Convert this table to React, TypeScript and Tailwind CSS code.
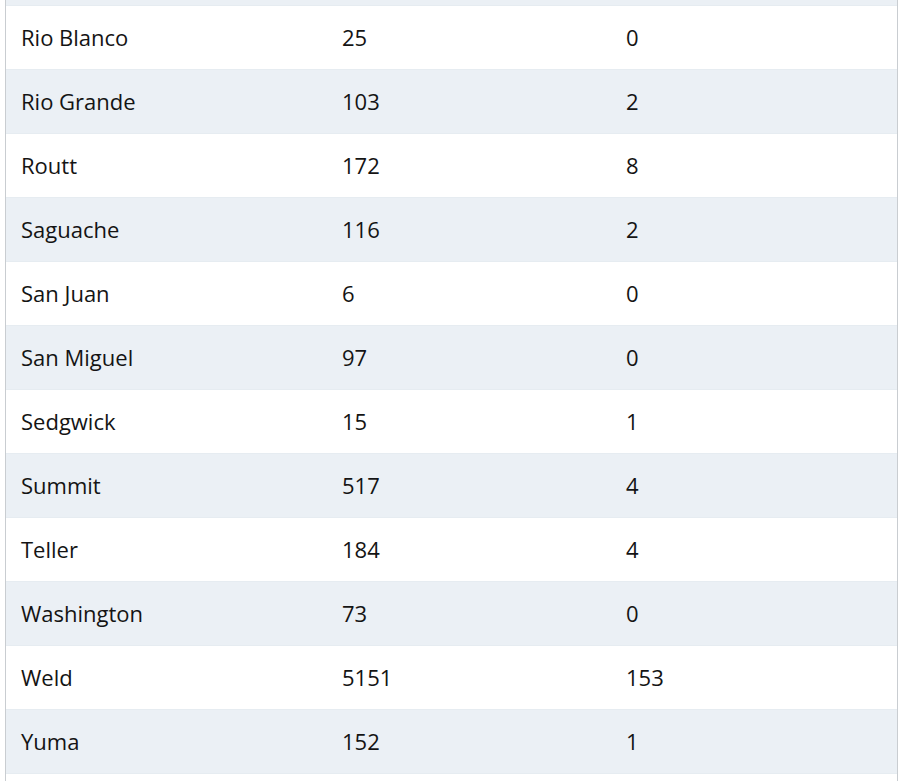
import React from "react";

const rows: [string, string, string][] = [
  ["Rio Blanco", "25", "0"],
  ["Rio Grande", "103", "2"],
  ["Routt", "172", "8"],
  ["Saguache", "116", "2"],
  ["San Juan", "6", "0"],
  ["San Miguel", "97", "0"],
  ["Sedgwick", "15", "1"],
  ["Summit", "517", "4"],
  ["Teller", "184", "4"],
  ["Washington", "73", "0"],
  ["Weld", "5151", "153"],
  ["Yuma", "152", "1"],
];

export default function App() {
  return (
    <div className="w-[905px] h-[781px] overflow-hidden bg-white">
      <div
        className="ml-[5px] w-[893px] h-[781px] border-l border-r border-[#c9cdd1] text-[22px] text-[#141414]"
        style={{ fontFamily: '"Open Sans", "DejaVu Sans", sans-serif' }}
      >
        <div className="h-[5px] bg-[#ebf0f5]" />
        {rows.map((r, i) => (
          <div
            key={r[0]}
            className={`flex items-center h-[64px] border-t border-[#e6ecf1] ${
              i % 2 === 1 ? "bg-[#ebf0f5]" : "bg-white"
            }`}
          >
            <div className="w-[321px] pl-[15px]">{r[0]}</div>
            <div className="w-[284px] pl-[15px]">{r[1]}</div>
            <div className="flex-1 pl-[15px]">{r[2]}</div>
          </div>
        ))}
        <div className="h-[8px] border-t border-[#e6ecf1] bg-white" />
      </div>
    </div>
  );
}
